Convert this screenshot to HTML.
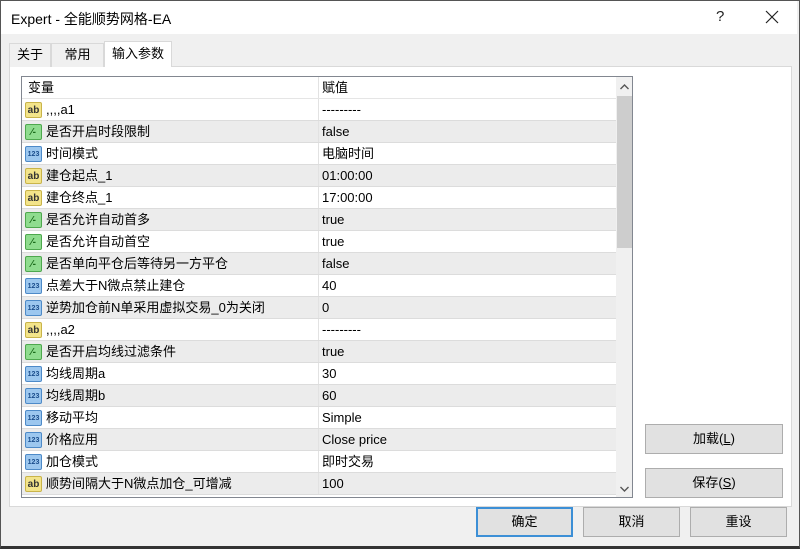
<!DOCTYPE html>
<html><head><meta charset="utf-8"><style>
*{margin:0;padding:0;box-sizing:border-box}
body{width:800px;height:549px;position:relative;overflow:hidden;background:#f0f0f0;font-family:"Liberation Sans","Noto Sans CJK SC",sans-serif;font-size:13px;color:#000}
.abs{position:absolute}
#frame{left:0;top:0;width:800px;height:549px;border:1px solid #555;border-bottom:3px solid #333}
#title{left:1px;top:1px;width:796px;height:33px;background:#fff}
.tab{top:43px;height:24px;line-height:22px;text-align:center;background:#f0f0f0;border:1px solid #d9d9d9;border-bottom:none}
#panel{left:9px;top:66px;width:783px;height:441px;background:#fff;border:1px solid #d9d9d9}
#tbl{left:21px;top:76px;width:612px;height:422px;border:1px solid #828790;background:#fff;overflow:hidden}
.row{position:absolute;left:0;width:594px;height:22px;border-bottom:1px solid #dcdcdc;line-height:21px}
.row.g{background:#ececec}
.c1{position:absolute;left:24px;top:0}
.c2{position:absolute;left:300px;top:0}
.sep{position:absolute;left:296px;top:0;width:1px;height:100%;background:#e2e2e2}
.ic{position:absolute;left:3px;top:3px;width:17px;height:16px;border-radius:2px;font-size:8px;font-weight:bold;line-height:15px;text-align:center}
.ab{background:#f3e48a;border:1px solid #c9b44a;color:#333;font-size:10px}
.bo{background:#8fdc8f;border:1px solid #4ea84e}
.n{background:#9cc7ef;border:1px solid #4d8ac8;color:#1a4d8c;font-size:7px}
.btn{height:30px;background:#e1e1e1;border:1px solid #adadad;text-align:center;line-height:28px}
</style></head><body>
<div class="abs" id="title"></div>
<div class="abs" style="left:11px;top:9px;font-size:14px">Expert - 全能顺势网格-EA</div>
<div class="abs" style="left:716px;top:8px;font-size:15px;color:#222">?</div>
<svg class="abs" style="left:764px;top:9px" width="16" height="16"><path d="M2 2L14 14M14 2L2 14" stroke="#222" stroke-width="1.2"/></svg>
<div class="abs" id="panel"></div>
<div class="abs tab" style="left:9px;width:42px">关于</div>
<div class="abs tab" style="left:51px;width:53px">常用</div>
<div class="abs tab" style="left:104px;top:41px;height:26px;width:68px;background:#fff;line-height:24px">输入参数</div>
<div class="abs" id="tbl">
<div class="row" style="top:0;height:22px;border-bottom:1px solid #e5e5e5"><span class="c1" style="left:6px">变量</span><span class="c2">赋值</span><div class="sep"></div></div>
<div id="rows"></div>
<div class="abs" style="left:594px;top:0;width:17px;height:420px;background:#f0f0f0"></div>
<svg class="abs" style="left:597px;top:6px" width="11" height="8"><path d="M1.5 6L5.5 2L9.5 6" stroke="#555" stroke-width="1.4" fill="none"/></svg>
<div class="abs" style="left:595px;top:19px;width:15px;height:152px;background:#cdcdcd"></div>
<svg class="abs" style="left:597px;top:408px" width="11" height="8"><path d="M1.5 2L5.5 6L9.5 2" stroke="#555" stroke-width="1.4" fill="none"/></svg>
</div>
<div class="abs btn" style="left:645px;top:424px;width:138px">加载(<u>L</u>)</div>
<div class="abs btn" style="left:645px;top:468px;width:138px">保存(<u>S</u>)</div>
<div class="abs btn" style="left:476px;top:507px;width:97px;border:2px solid #3c8fd6;line-height:26px">确定</div>
<div class="abs btn" style="left:583px;top:507px;width:97px">取消</div>
<div class="abs btn" style="left:690px;top:507px;width:97px">重设</div>
<div class="abs" id="frame"></div>
<script>
var d=[["ab",",,,,a1","---------"],["bo","是否开启时段限制","false"],["n","时间模式","电脑时间"],["ab","建仓起点_1","01:00:00"],["ab","建仓终点_1","17:00:00"],["bo","是否允许自动首多","true"],["bo","是否允许自动首空","true"],["bo","是否单向平仓后等待另一方平仓","false"],["n","点差大于N微点禁止建仓","40"],["n","逆势加仓前N单采用虚拟交易_0为关闭","0"],["ab",",,,,a2","---------"],["bo","是否开启均线过滤条件","true"],["n","均线周期a","30"],["n","均线周期b","60"],["n","移动平均","Simple"],["n","价格应用","Close price"],["n","加仓模式","即时交易"],["ab","顺势间隔大于N微点加仓_可增减","100"]];
var h="";d.forEach(function(r,i){var t=r[0]=="ab"?"ab":r[0]=="n"?"123":"<span style='color:#1b6b1b;font-size:10px'>⁄-</span>";
h+='<div class="row'+(i%2?' g':'')+'" style="top:'+(22+i*22)+'px"><div class="ic '+r[0]+'">'+t+'</div><span class="c1">'+r[1]+'</span><div class="sep"></div><span class="c2">'+r[2]+'</span></div>';});
document.getElementById("rows").innerHTML=h;
</script>
</body></html>
